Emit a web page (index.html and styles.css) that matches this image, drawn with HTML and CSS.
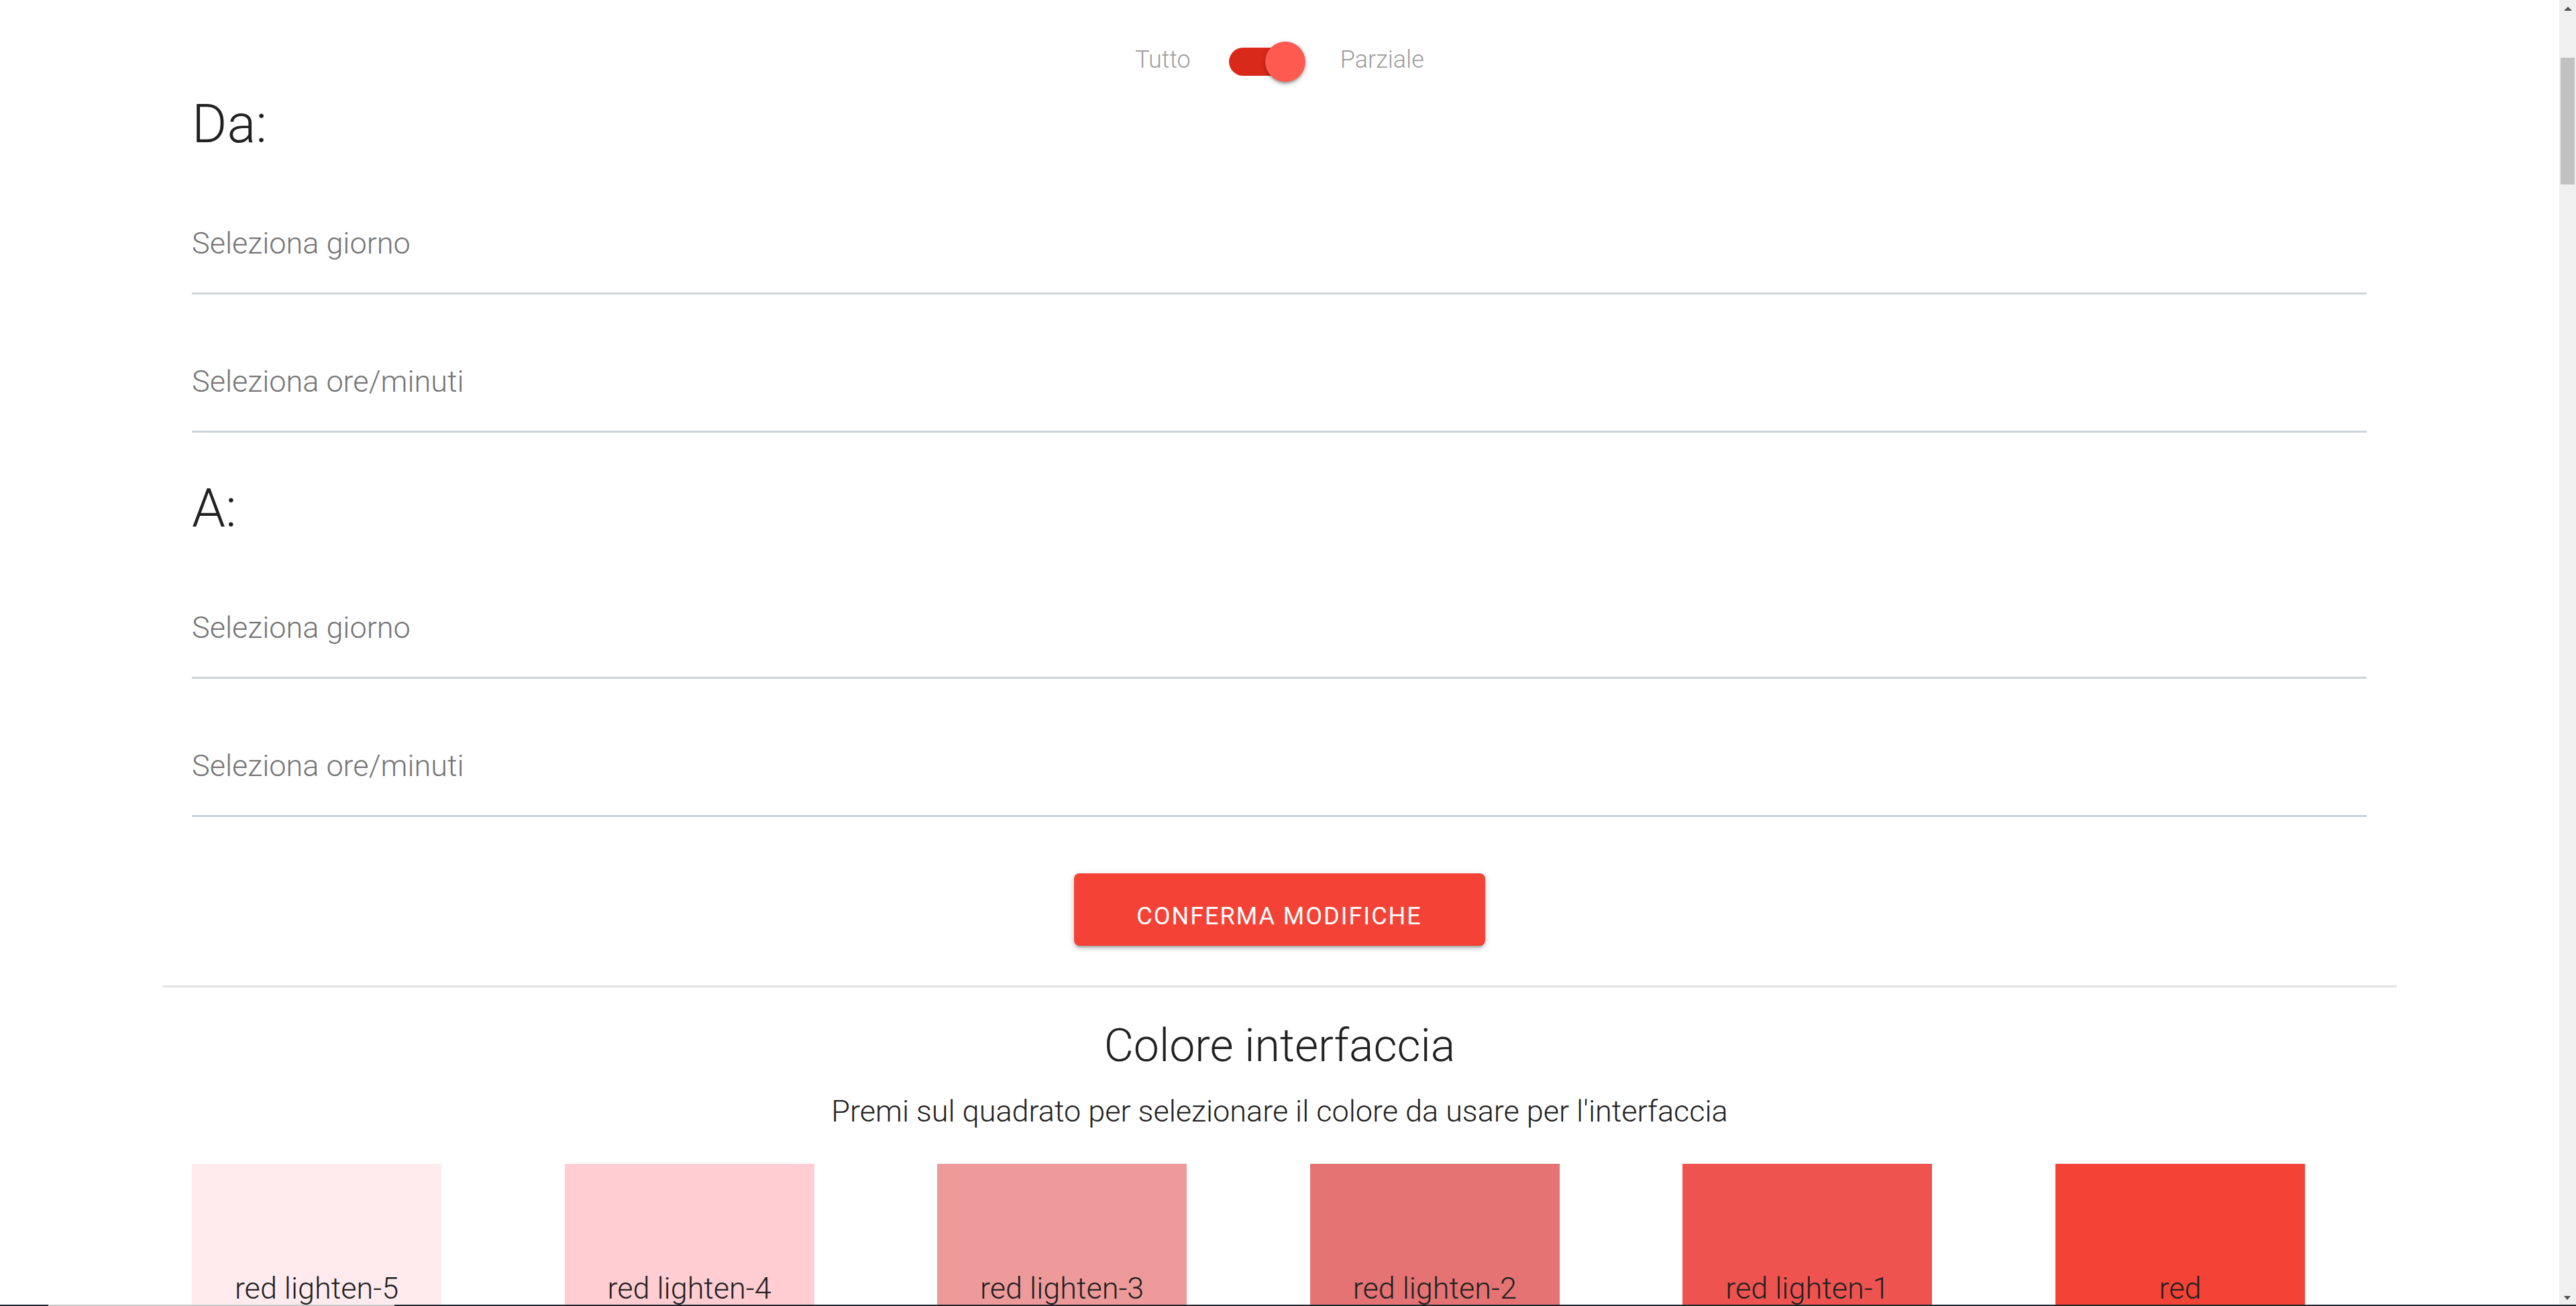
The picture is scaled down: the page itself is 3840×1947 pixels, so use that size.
FILE: index.html
```
<!DOCTYPE html>
<html lang="it">
<head>
<meta charset="utf-8">
<title>Impostazioni</title>
<link rel="stylesheet" href="styles.css">
</head>
<body>
<main class="page">
  <div class="mode-toggle">
    <span class="mode-label">Tutto</span>
    <div class="switch">
      <div class="switch-track"></div>
      <div class="switch-thumb"></div>
    </div>
    <span class="mode-label">Parziale</span>
  </div>

  <section class="form">
    <h2 class="range-title">Da:</h2>
    <div class="field"><span class="field-label">Seleziona giorno</span></div>
    <div class="field"><span class="field-label">Seleziona ore/minuti</span></div>

    <h2 class="range-title range-title--to">A:</h2>
    <div class="field"><span class="field-label">Seleziona giorno</span></div>
    <div class="field"><span class="field-label">Seleziona ore/minuti</span></div>

    <div class="actions">
      <button class="btn-confirm" type="button">Conferma modifiche</button>
    </div>
  </section>

  <hr class="divider">

  <section class="colors">
    <h2 class="colors-title">Colore interfaccia</h2>
    <p class="colors-subtitle">Premi sul quadrato per selezionare il colore da usare per l'interfaccia</p>
    <div class="swatches">
      <div class="swatch swatch--l5"><span>red lighten-5</span></div>
      <div class="swatch swatch--l4"><span>red lighten-4</span></div>
      <div class="swatch swatch--l3"><span>red lighten-3</span></div>
      <div class="swatch swatch--l2"><span>red lighten-2</span></div>
      <div class="swatch swatch--l1"><span>red lighten-1</span></div>
      <div class="swatch swatch--base"><span>red</span></div>
    </div>
  </section>
</main>

<div class="scrollbar">
  <div class="sb-up"></div>
  <div class="sb-thumb"></div>
  <div class="sb-down"></div>
</div>
<div class="bottom-edge"></div>
</body>
</html>
```

FILE: styles.css
```
html, body {
  margin: 0;
  height: 100%;
  overflow: hidden;
  background: #ffffff;
}

body {
  font-family: Roboto, "Noto Sans", "Liberation Sans", sans-serif;
  font-weight: 300;
  color: #212121;
}

.page {
  margin-right: 25px;
}

/* ---------- toggle ---------- */
.mode-toggle {
  display: flex;
  justify-content: center;
  align-items: center;
  height: 60px;
  padding-top: 62px;
}

.mode-label {
  font-size: 36px;
  line-height: 60px;
  color: #9e9e9e;
  margin-bottom: 6px;
}

.switch {
  position: relative;
  width: 114px;
  height: 60px;
  margin: 0 52px 0 57px;
}

.switch-track {
  position: absolute;
  left: 0;
  top: 9px;
  width: 108px;
  height: 42px;
  border-radius: 21px;
  background: #d9291b;
}

.switch-thumb {
  position: absolute;
  left: 54px;
  top: 0;
  width: 60px;
  height: 60px;
  border-radius: 50%;
  background: #ff5a4f;
  box-shadow: 0 5px 3px -2px rgba(0, 0, 0, 0.2), 0 3px 6px 0 rgba(0, 0, 0, 0.14), 0 2px 10px 0 rgba(0, 0, 0, 0.12);
}

/* ---------- form ---------- */
.form {
  padding: 0 287px 0 286px;
}

.range-title {
  margin: 15px 0 0;
  font-size: 80px;
  font-weight: 300;
  line-height: 96px;
  color: #212121;
}

.range-title--to {
  margin-top: 65px;
}

.field {
  padding-top: 100px;
  padding-bottom: 43px;
  border-bottom: 3px solid #cdd4da;
}

.field-label {
  display: block;
  font-size: 45px;
  line-height: 60px;
  color: #757575;
}

.actions {
  display: flex;
  justify-content: center;
  padding-top: 84px;
}

.btn-confirm {
  width: 613px;
  height: 108px;
  border: 0;
  border-radius: 8px;
  background: #f44336;
  color: #ffffff;
  font-family: Roboto, "Noto Sans", sans-serif;
  font-size: 36px;
  font-weight: 400;
  letter-spacing: 2px;
  text-transform: uppercase;
  box-shadow: 0 6px 3px -4px rgba(0, 0, 0, 0.2), 0 4px 6px 0 rgba(0, 0, 0, 0.14), 0 2px 12px 0 rgba(0, 0, 0, 0.12);
  padding: 20px 0 0;
}

.divider {
  margin: 59px 242px 0;
  border: 0;
  height: 3px;
  background: #e3e3e3;
}

/* ---------- colours ---------- */
.colors {
  text-align: center;
}

.colors-title {
  margin: 46px 0 0;
  font-size: 68px;
  font-weight: 300;
  line-height: 82px;
  color: #212121;
}

.colors-subtitle {
  margin: 31px 0 0;
  font-size: 45px;
  line-height: 52px;
  font-weight: 300;
  color: #212121;
}

.swatches {
  display: grid;
  grid-template-columns: repeat(6, 372px);
  column-gap: 183.6px;
  margin-top: 52px;
  padding-left: 286px;
}

.swatch {
  height: 372px;
  display: flex;
  align-items: center;
  justify-content: center;
  font-size: 45px;
  line-height: 60px;
  color: #212121;
}

.swatch--l5 { background: #ffebee; }
.swatch--l4 { background: #ffcdd2; }
.swatch--l3 { background: #ef9a9a; }
.swatch--l2 { background: #e57373; }
.swatch--l1 { background: #ef5350; }
.swatch--base { background: #f44336; }

/* ---------- fake browser chrome ---------- */
.scrollbar {
  position: fixed;
  top: 0;
  right: 0;
  width: 25px;
  height: 100%;
  background: #f0f0f0;
}

.sb-thumb {
  position: absolute;
  left: 2px;
  top: 86px;
  width: 21px;
  height: 189px;
  background: #c1c1c1;
}

.sb-up {
  position: absolute;
  top: 10px;
  left: 7px;
  width: 0;
  height: 0;
  border-left: 6px solid transparent;
  border-right: 6px solid transparent;
  border-bottom: 6px solid #505050;
}

.sb-down {
  position: absolute;
  bottom: 9px;
  left: 7px;
  width: 0;
  height: 0;
  border-left: 5px solid transparent;
  border-right: 5px solid transparent;
  border-top: 6px solid #505050;
}

.bottom-edge {
  position: fixed;
  left: 0;
  right: 0;
  bottom: 0;
  height: 2px;
  background: linear-gradient(to right, #1f262c 0 72px, #c8c8c8 72px 588px, #1f262c 588px);
}
```
